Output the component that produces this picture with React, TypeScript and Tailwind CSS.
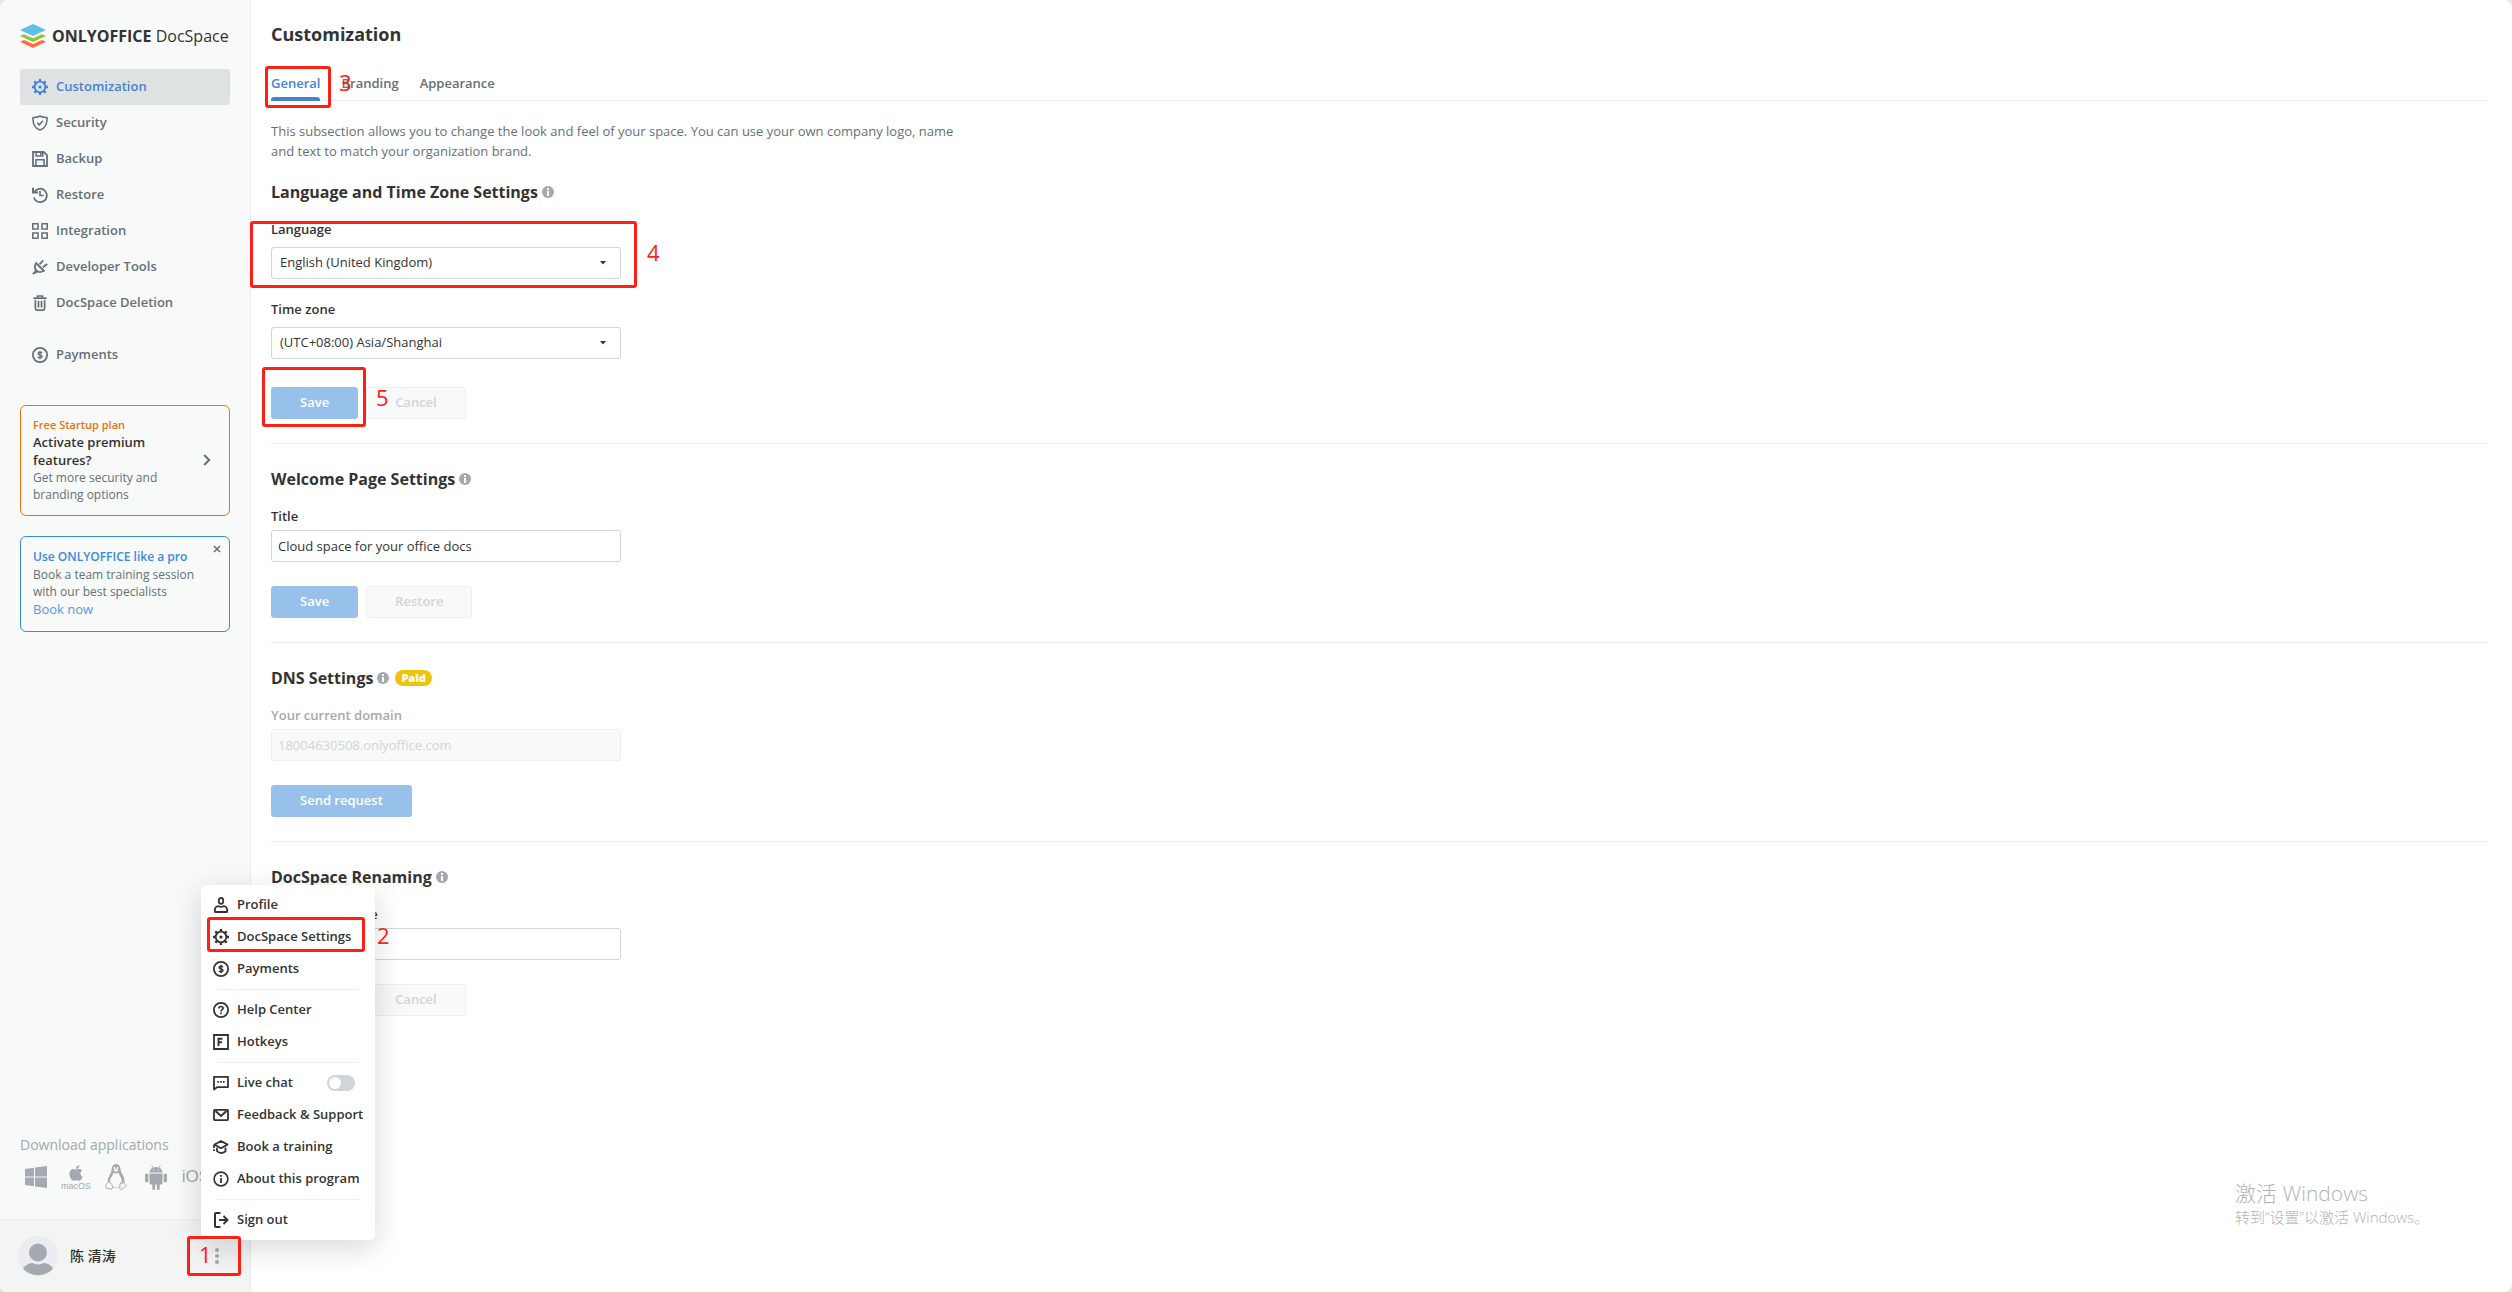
import { useState } from "react";
import type { ReactNode } from "react";
import { FaApple } from "react-icons/fa";

function Icon({ children, className = "" }: { children: ReactNode; className?: string }) {
  return (
    <svg
      viewBox="0 0 16 16"
      className={`size-4 shrink-0 ${className}`}
      fill="none"
      stroke="currentColor"
      strokeWidth="1.8"
      aria-hidden="true"
    >
      {children}
    </svg>
  );
}

const GearIcon = () => (
  <Icon>
    <circle cx="8" cy="8" r="5.3" strokeWidth="1.8" />
    <circle cx="8" cy="8" r="1.6" fill="currentColor" stroke="none" />
    <path
      strokeWidth="2.4"
      d="M8 0v2.6M8 13.4V16M0 8h2.6M13.4 8H16M2.3 2.3l1.9 1.9M11.8 11.8l1.9 1.9M2.3 13.7l1.9-1.9M11.8 4.2l1.9-1.9"
    />
  </Icon>
);

const ShieldIcon = () => (
  <Icon>
    <path strokeWidth="1.6" strokeLinejoin="round" d="M8 1c2 1.2 4.4 1.7 7 1.5.3 6-1.6 10.6-7 12.5C2.6 13.1.7 8.500 1 2.500 3.600 2.700 6 2.200 8 1z" />
    <path strokeWidth="1.6" d="M5.2 7.900l2 1.900 3.800-4" />
  </Icon>
);

const BackupIcon = () => (
  <Icon>
    <path d="M1 1h10.800L15 4.200V15H1z" />
    <path strokeWidth="1.6" d="M4.200 1v4h6.600V1M4 15V8.800h8V15M8.800 2v2" />
  </Icon>
);

const RestoreIcon = () => (
  <Icon>
    <path d="M2.300 5.200A6.700 6.700 0 1 1 1.800 10.500" />
    <path strokeWidth="2" d="M1 .8v4.800h5" />
    <path strokeWidth="1.7" d="M8 4v4.500h3.600" />
  </Icon>
);

const IntegrationIcon = () => (
  <Icon>
    <path strokeWidth="1.6" d="M.8.8H6V6H.8zM10 .8h5.200V6H10zM.8 10H6v5.200H.8zM10 10h5.200v5.200H10z" />
  </Icon>
);

const DeveloperIcon = () => (
  <Icon>
    <path
      strokeWidth="1.8"
      d="M3.500 3.500l9 9M4.300 4.300C2.300 7 2.600 9.600 4.200 11.400c2 2 4.800 2.200 7.400.2M4 12L.8 15.200M7.500 5.400l3.800-4M10.800 8.300L15.200 5M3 12.500l1.500 1.500M2.500 12.500h4"
    />
  </Icon>
);

const TrashIcon = () => (
  <Icon>
    <path d="M1.300 3.200h13.400" />
    <path strokeWidth="1.7" d="M5.500 3V1h5v2M3.400 5v8.500q0 1.600 1.600 1.600h6q1.600 0 1.600-1.600V5M6.500 6v6.500M9.500 6v6.500" />
  </Icon>
);

const PaymentsIcon = () => (
  <Icon>
    <circle cx="8" cy="8" r="7.100" />
    <path
      strokeWidth="1.4"
      d="M10 6.200C9.600 5.400 9 5.200 8 5.200c-1.200 0-1.900.5-1.900 1.300C6.100 8.500 10 7.400 10 9.500c0 .9-.8 1.400-2 1.400-1.100 0-1.800-.4-2.100-1.200M8 3.800v8.400"
    />
  </Icon>
);

const ProfileIcon = () => (
  <Icon>
    <rect x="5.800" y="1" width="4.400" height="5.800" rx="2.200" />
    <path d="M2 15c-.6-3.500.6-5.600 3-5.800L8 10l3-.8c2.400.2 3.600 2.300 3 5.800z" strokeLinejoin="round" />
  </Icon>
);

const HelpIcon = () => (
  <Icon>
    <circle cx="8" cy="8" r="7.100" />
    <path strokeWidth="1.7" d="M5.900 6.500C5.900 5.200 6.800 4.500 8 4.500s2.100.7 2.100 1.800C10.100 7.700 8 7.700 8 9.500M8 10.600v1.600" />
  </Icon>
);

const HotkeysIcon = () => (
  <Icon>
    <path d="M1 1h14v14H1z" />
    <path strokeWidth="1.9" d="M5.500 12V4.800h4M5.500 8.200h3.500" />
  </Icon>
);

const ChatIcon = () => (
  <Icon>
    <path d="M1 1.900h14v10.200H4.500L1 14.500z" strokeLinejoin="round" />
    <path strokeWidth="1.7" strokeDasharray="1.6 1.2" d="M4.400 6.900h7.400" />
  </Icon>
);

const MailIcon = () => (
  <Icon>
    <rect x="1" y="2.900" width="14" height="10.200" rx=".5" />
    <path strokeWidth="2" d="M2.500 4L8 9l5.500-5" />
  </Icon>
);

const TrainingIcon = () => (
  <Icon>
    <path strokeWidth="1.8" strokeLinejoin="round" d="M1.500 5.600L8 2l6.500 3.600L8 9.200zM1 6v3M1 10.200v1.700" />
    <path strokeWidth="1.8" d="M4 8.800v3.400q4 3.600 8.500 0V8.500" />
  </Icon>
);

const AboutIcon = () => (
  <Icon>
    <circle cx="8" cy="8" r="6.900" strokeWidth="1.6" />
    <path d="M8 7v5M8 4v1.800" />
  </Icon>
);

const SignOutIcon = () => (
  <Icon>
    <path strokeWidth="2" d="M7.500 1H3q-1 0-1 1v12q0 1 1 1h4.500" />
    <path strokeWidth="1.9" d="M6 8h8M10.500 4l4 4-4 4" />
  </Icon>
);

const InfoDot = () => (
  <button type="button" aria-label="More info" className="text-[#a3a9ae]">
    <svg viewBox="0 0 12 12" className="size-3" aria-hidden="true">
      <circle cx="6" cy="6" r="6" fill="currentColor" />
      <path d="M6 2v2M6 5v5" stroke="#fff" strokeWidth="2" />
    </svg>
  </button>
);

const sideNav = [
  { label: "Customization", icon: <GearIcon />, active: true },
  { label: "Security", icon: <ShieldIcon /> },
  { label: "Backup", icon: <BackupIcon /> },
  { label: "Restore", icon: <RestoreIcon /> },
  { label: "Integration", icon: <IntegrationIcon /> },
  { label: "Developer Tools", icon: <DeveloperIcon /> },
  { label: "DocSpace Deletion", icon: <TrashIcon /> },
];

const menuGroups = [
  [
    { label: "Profile", icon: <ProfileIcon /> },
    { label: "DocSpace Settings", icon: <GearIcon /> },
    { label: "Payments", icon: <PaymentsIcon /> },
  ],
  [
    { label: "Help Center", icon: <HelpIcon /> },
    { label: "Hotkeys", icon: <HotkeysIcon /> },
  ],
  [
    { label: "Live chat", icon: <ChatIcon />, toggle: true },
    { label: "Feedback & Support", icon: <MailIcon /> },
    { label: "Book a training", icon: <TrainingIcon /> },
    { label: "About this program", icon: <AboutIcon /> },
  ],
  [{ label: "Sign out", icon: <SignOutIcon /> }],
];

// numbered steps drawn over the page
const steps = [
  { n: "1", box: "left-[187px] bottom-4 w-[54px] h-10", num: "left-[199px] bottom-[23px]" },
  { n: "2", box: "left-[207px] bottom-[340px] w-[158px] h-[35px]", num: "left-[377px] bottom-[342px]" },
  { n: "3", box: "left-[265px] top-[66px] w-[66px] h-[42px]", num: "left-[339px] top-[67px]" },
  { n: "4", box: "left-[250px] top-[221px] w-[387px] h-[67px]", num: "left-[647px] top-[237px]" },
  { n: "5", box: "left-[262px] top-[367px] w-[104px] h-[60px]", num: "left-[376px] top-[382px]" },
];

function NavItem({ label, icon, active }: { label: string; icon: ReactNode; active?: boolean }) {
  return (
    <a
      href="#"
      className={`flex h-9 items-center gap-2 rounded-[3px] px-3 text-[13px] font-semibold ${
        active ? "bg-[#dfe2e3] text-[#4781d1]" : "text-[#657077]"
      }`}
    >
      {icon}
      {label}
    </a>
  );
}

function Logo() {
  return (
    <div className="flex h-6 items-center gap-1.5">
      <svg viewBox="0 0 26 24" className="h-6 w-[26px] shrink-0" aria-hidden="true">
        <path d="M0 17.800l4-1.700 9 4 9-4 4 1.700L13 24z" fill="#ff6f3d" />
        <path d="M0 12l4-1.700 9 4 9-4 4 1.700-13 6.100z" fill="#95c038" />
        <path d="M0 6L13 0l13 6-13 6.100z" fill="#5dc0e8" />
      </svg>
      <span className="whitespace-nowrap text-[16px] leading-6 text-[#333]">
        <b className="font-bold">ONLYOFFICE</b> DocSpace
      </span>
    </div>
  );
}

function Sidebar() {
  return (
    <aside className="flex w-[251px] shrink-0 flex-col border-r border-[#eceef1] bg-[#f8f9f9]">
      <div className="px-5 pt-6">
        <Logo />
        <nav className="mt-[21px]">
          {sideNav.map((item) => (
            <NavItem key={item.label} {...item} />
          ))}
          <div className="mt-4">
            <NavItem label="Payments" icon={<PaymentsIcon />} />
          </div>
        </nav>

        <button
          type="button"
          className="mt-8 flex w-full items-center justify-between rounded-md border border-[#ed7309] pb-3 pl-3 pr-[18px] pt-[11px] text-left"
        >
          <span className="block">
            <span className="block text-[11px] font-semibold leading-4 text-[#ed7309]">Free Startup plan</span>
            <span className="block text-[13px] font-semibold leading-[18px] text-[#333]">
              Activate premium
              <br />
              features?
            </span>
            <span className="block text-xs leading-[17px] text-[#657077]">
              Get more security and
              <br />
              branding options
            </span>
          </span>
          <svg viewBox="0 0 8 12" className="h-3 w-2 shrink-0 text-[#657077]" aria-hidden="true">
            <path d="M1.200 1l5 5-5 5" fill="none" stroke="currentColor" strokeWidth="2" />
          </svg>
        </button>

        <div className="relative mt-5 rounded-md border border-[#388bde] px-3 pb-[13px] pt-[11px] text-xs leading-[17px] text-[#657077]">
          <p className="font-semibold leading-[18px] text-[#388bde]">Use ONLYOFFICE like a pro</p>
          <p className="whitespace-nowrap">
            Book a team training session
            <br />
            with our best specialists
          </p>
          <a href="#" className="block text-[13px] leading-[18px] text-[#5299e0]">
            Book now
          </a>
          <button type="button" aria-label="Close" className="absolute right-2 top-2 text-[#657077]">
            <svg viewBox="0 0 8 8" className="size-2" aria-hidden="true">
              <path d="M1 1l6 6M7 1L1 7" stroke="currentColor" strokeWidth="1.5" />
            </svg>
          </button>
        </div>
      </div>

      <div className="mt-auto px-5 pb-[26px]">
        <p className="text-sm leading-5 text-[#a3a9ae]">Download applications</p>
        <div className="mt-1.5 flex items-center gap-2 text-[#a3a9ae]">
          <a href="#" aria-label="Windows" className="flex size-8 items-center justify-center">
            <svg viewBox="0 0 22 22" className="size-[22px]" fill="currentColor" aria-hidden="true">
              <path d="M0 3l9-1.300v8.800H0zM10 1.500L22 0v10.500H10zM0 11.500h9v8.700L0 19zM10 11.500h12V22l-12-1.600z" />
            </svg>
          </a>
          <a
            href="#"
            className="flex size-8 flex-col items-center justify-center font-['Liberation_Sans',sans-serif] text-[9px] leading-[9px]"
          >
            <FaApple className="size-[18px] shrink-0" aria-hidden="true" />
            macOS
          </a>
          <a href="#" aria-label="Linux" className="flex size-8 items-center justify-center">
            <svg viewBox="0 0 22 26" className="h-[26px] w-[22px]" fill="none" stroke="currentColor" aria-hidden="true">
              <path
                d="M7.300 5c0-2.800 1.400-4.500 3.800-4.500S15 2.200 15 5c0 4 4.200 6.500 4 13.500l-2.500 5H6L3 18.500C2.800 12.500 7.300 9.500 7.300 5z"
                fill="currentColor"
              />
              <path
                d="M8.600 8.500l2.400 1.300 2.500-1.300c.8 3.200 3.500 5.500 3.300 9.500l-.6 5.500H6.500L5 17.500c0-3.500 2.800-5.500 3.600-9z"
                fill="#f8f9f9"
                stroke="none"
              />
              <path d="M8.300 6.300L11 4.800l2.600 1.500L11 8z" fill="#f8f9f9" stroke="none" />
              <ellipse cx="9.500" cy="4" rx=".9" ry="1.200" fill="#f8f9f9" stroke="none" />
              <ellipse cx="12.500" cy="4" rx=".9" ry="1.200" fill="#f8f9f9" stroke="none" />
              <path
                d="M3.500 17.500c1.500 0 2.700 2.500 4 4.500 1 2-.5 3.500-2.500 3-1.500-.5-3-.6-4-1.200-.7-.7.200-1.800 0-3.100.3-1 1.800-1 2.500-3.200zM15.500 18.500c.8 1.200 2.500 1 3.300-.2.900.3.500 1.800 2.600 3.200-.2 1.500-2.600 1.800-4 3.500-1.500.8-2.900 0-2.700-1.700.2-1.800.2-3.300.8-4.800z"
                fill="#f8f9f9"
                strokeLinejoin="round"
              />
            </svg>
          </a>
          <a href="#" aria-label="Android" className="flex size-8 items-center justify-center">
            <svg viewBox="0 0 22 25" className="h-[25px] w-[22px]" fill="currentColor" aria-hidden="true">
              <path
                fillRule="evenodd"
                d="M4.500 7.500C4.700 5 6 3.500 7.700 2.700L6.300.5l.6-.4 1.500 2.300a8 8 0 0 1 5.200 0L15.100.1l.6.4-1.400 2.200c1.700.8 3 2.300 3.200 4.800zM8 4.500v1h1v-1zm5 0v1h1v-1z"
              />
              <path d="M4.500 8.500h13V18q0 1.500-1.500 1.500h-1.300v4q0 1.500-1.400 1.500t-1.400-1.500v-4h-1.800v4Q10.100 25 8.700 25t-1.400-1.500v-4H6q-1.500 0-1.500-1.500z" />
              <rect x="0" y="8.500" width="3.400" height="9" rx="1.700" />
              <rect x="18.600" y="8.500" width="3.400" height="9" rx="1.700" />
            </svg>
          </a>
          <a
            href="#"
            className="flex size-8 items-center justify-center font-['Liberation_Sans',sans-serif] text-[17px]"
          >
            iOS
          </a>
        </div>
      </div>

      <div className="flex h-[73px] items-center gap-3 border-t border-[#eceef1] bg-[#f3f4f4] pl-[18px] pr-[31px]">
        <svg viewBox="0 0 40 40" className="size-10 shrink-0" aria-hidden="true">
          <circle cx="20" cy="20" r="20" fill="#ebecf1" />
          <circle cx="20" cy="16.500" r="9" fill="#a3a9ae" />
          <path d="M5 32.500C8 28.500 12 27 14.500 27q5.500 3 11 0c3 0 7 1.500 9.500 5.500A20 20 0 0 1 5 32.500z" fill="#a3a9ae" />
        </svg>
        <span className="text-sm font-medium text-[#333]">陈 清涛</span>
        <button type="button" aria-label="User menu" className="ml-auto text-[#a3a9ae]">
          <svg viewBox="0 0 4 16" className="h-4 w-1" fill="currentColor" aria-hidden="true">
            <circle cx="2" cy="2" r="2" />
            <circle cx="2" cy="8" r="2" />
            <circle cx="2" cy="14" r="2" />
          </svg>
        </button>
      </div>
    </aside>
  );
}

function Heading({ children, badge }: { children: ReactNode; badge?: string }) {
  return (
    <div className="flex h-[22px] items-center gap-1">
      <h2 className="text-base font-bold leading-[22px] text-[#333]">{children}</h2>
      <InfoDot />
      {badge && (
        <span className="ml-0.5 flex h-4 items-center rounded-full bg-[#edc409] px-1.5 text-[11px] font-extrabold leading-4 text-white">
          {badge}
        </span>
      )}
    </div>
  );
}

function SelectField({ id, label, options }: { id: string; label: string; options: string[] }) {
  return (
    <div>
      <label htmlFor={id} className="block text-[13px] font-semibold leading-5 text-[#333]">
        {label}
      </label>
      <div className="relative mt-2 w-full max-w-[350px]">
        <select
          id={id}
          className="h-8 w-full appearance-none rounded-[3px] border border-[#d0d5da] bg-white px-2 text-[13px] text-[#333] outline-none"
        >
          {options.map((o) => (
            <option key={o}>{o}</option>
          ))}
        </select>
        <svg viewBox="0 0 6 4" className="pointer-events-none absolute right-[15px] top-3.5 h-1 w-1.5" aria-hidden="true">
          <path d="M0 0h6L3 3.500z" fill="#333" />
        </svg>
      </div>
    </div>
  );
}

function TextField({ id, label, value, disabled }: { id: string; label: string; value: string; disabled?: boolean }) {
  const [text, setText] = useState(value);
  return (
    <div>
      <label
        htmlFor={id}
        className={`block text-[13px] font-semibold leading-5 ${disabled ? "text-[#a3a9ae]" : "text-[#333]"}`}
      >
        {label}
      </label>
      <input
        id={id}
        type="text"
        value={text}
        disabled={disabled}
        onChange={(e) => setText(e.target.value)}
        className="mt-1 block h-8 w-full max-w-[350px] rounded-[3px] border border-[#d0d5da] bg-white px-1.5 text-[13px] text-[#333] outline-none disabled:border-[#eceef1] disabled:bg-[#f8f9f9] disabled:text-[#d0d5da]"
      />
    </div>
  );
}

function Actions({ primary, secondary }: { primary: string; secondary?: string }) {
  return (
    <div className="flex gap-2">
      <button
        type="button"
        className="h-8 rounded-[3px] border border-[#97c1eb] bg-[#97c1eb] px-7 text-[13px] font-semibold text-white"
      >
        {primary}
      </button>
      {secondary && (
        <button
          type="button"
          disabled
          className="h-8 rounded-[3px] border border-[#eceef1] bg-[#f8f9f9] px-7 text-[13px] font-semibold text-[#d0d5da]"
        >
          {secondary}
        </button>
      )}
    </div>
  );
}

function Section({ children }: { children: ReactNode }) {
  return <section className="border-b border-[#eceef1] pb-6 pt-6 first:pt-5 last:border-b-0">{children}</section>;
}

function UserMenu() {
  const [liveChat, setLiveChat] = useState(false);
  return (
    <div className="absolute bottom-[52px] left-[201px] w-[174px] rounded-md bg-white py-1 shadow-[0_8px_30px_rgba(4,15,27,0.16)]">
      {menuGroups.map((group, i) => (
        <div key={i}>
          {i > 0 && <hr className="mx-4 my-1 border-t border-[#eceef1]" />}
          {group.map((item) =>
            "toggle" in item ? (
              <label key={item.label} className="flex h-8 items-center gap-2 pl-3 pr-5 text-[13px] font-semibold text-[#333]">
                {item.icon}
                {item.label}
                <input
                  type="checkbox"
                  checked={liveChat}
                  onChange={(e) => setLiveChat(e.target.checked)}
                  className="peer sr-only"
                />
                <span className="ml-auto flex h-4 w-7 items-center rounded-full bg-[#d0d5da] p-0.5 peer-checked:justify-end peer-checked:bg-[#35ad17]">
                  <span className="size-3 rounded-full bg-white" />
                </span>
              </label>
            ) : (
              <button
                key={item.label}
                type="button"
                className="flex h-8 w-full items-center gap-2 whitespace-nowrap pl-3 text-[13px] font-semibold text-[#333]"
              >
                {item.icon}
                {item.label}
              </button>
            )
          )}
        </div>
      ))}
    </div>
  );
}

export default function App() {
  return (
    <div className="bg-[#e4e6e6] font-['Open_Sans','Noto_Sans_CJK_SC',sans-serif]">
      <div className="relative flex min-h-screen overflow-hidden rounded-lg bg-white">
        <Sidebar />

        <main className="min-w-0 flex-1 pl-5 pr-6">
          <h1 className="pt-[22px] text-lg font-bold leading-6 text-[#333]">Customization</h1>

          <nav className="mt-[27px] flex gap-[21px] border-b border-[#eceef1] text-[13px] font-semibold text-[#657077]">
            <a href="#" className="-mb-px flex flex-col text-[#4781d1]">
              <span className="leading-5">General</span>
              <span className="mt-1 h-1 rounded-t-[3px] bg-[#4781d1]" />
            </a>
            <a href="#" className="leading-5">
              Branding
            </a>
            <a href="#" className="leading-5">
              Appearance
            </a>
          </nav>

          <p className="mt-5 max-w-[700px] text-[13px] leading-5 text-[#657077]">
            This subsection allows you to change the look and feel of your space. You can use your own company logo, name
            and text to match your organization brand.
          </p>

          <div>
            <Section>
              <Heading>Language and Time Zone Settings</Heading>
              <div className="mb-7 mt-4 flex flex-col gap-5">
                <SelectField
                  id="language"
                  label="Language"
                  options={["English (United Kingdom)", "English (United States)", "Deutsch", "Français"]}
                />
                <SelectField
                  id="timezone"
                  label="Time zone"
                  options={["(UTC+08:00) Asia/Shanghai", "(UTC+00:00) Europe/London"]}
                />
              </div>
              <Actions primary="Save" secondary="Cancel" />
            </Section>

            <Section>
              <Heading>Welcome Page Settings</Heading>
              <div className="mb-6 mt-4">
                <TextField id="title" label="Title" value="Cloud space for your office docs" />
              </div>
              <Actions primary="Save" secondary="Restore" />
            </Section>

            <Section>
              <Heading badge="Paid">DNS Settings</Heading>
              <div className="mb-6 mt-4">
                <TextField id="domain" label="Your current domain" value="18004630508.onlyoffice.com" disabled />
              </div>
              <Actions primary="Send request" />
            </Section>

            <Section>
              <Heading>DocSpace Renaming</Heading>
              <div className="mb-6 mt-4">
                <TextField id="rename" label="New space name" value="" />
              </div>
              <Actions primary="Save" secondary="Cancel" />
            </Section>
          </div>
        </main>

        <UserMenu />

        {steps.map((s) => (
          <div key={s.n} className="pointer-events-none text-[#ff2015]">
            <div className={`absolute rounded-[3px] border-[3px] border-[#ff2015] ${s.box}`} />
            <span className={`absolute text-[22px] leading-[30px] ${s.num}`}>{s.n}</span>
          </div>
        ))}

        <div className="pointer-events-none absolute bottom-[65px] right-[77px] w-[200px] whitespace-nowrap font-light text-[#b3b3b3]">
          <p className="text-[21px] leading-7">激活 Windows</p>
          <p className="text-[15px] leading-5">转到“设置”以激活 Windows。</p>
        </div>
      </div>
    </div>
  );
}
